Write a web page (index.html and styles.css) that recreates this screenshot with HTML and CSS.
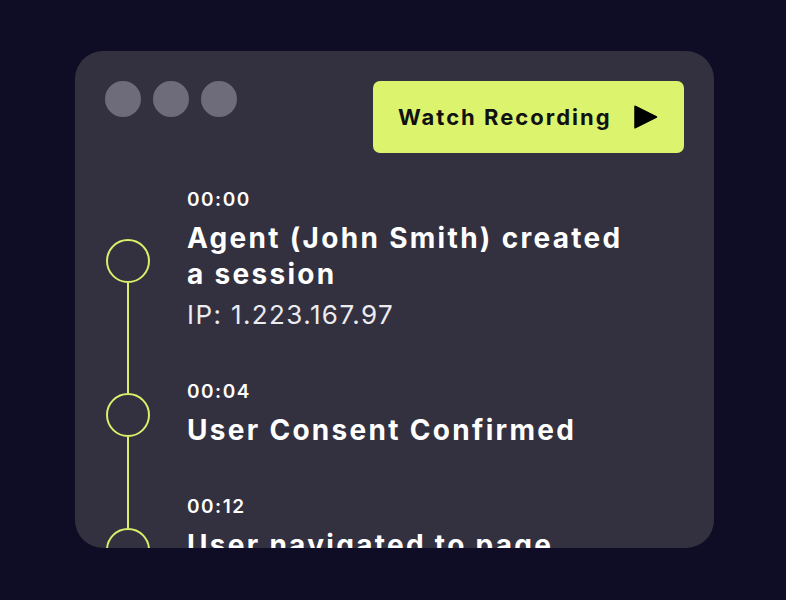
FILE: index.html
```html
<!DOCTYPE html>
<html lang="en">
<head>
<meta charset="utf-8">
<title>Session timeline</title>
<link rel="stylesheet" href="styles.css">
</head>
<body>
<div class="stage">
  <section class="card">
    <header class="card-head">
      <div class="dots">
        <span class="dot"></span><span class="dot"></span><span class="dot"></span>
      </div>
      <button class="watch-btn" type="button">
        <span>Watch Recording</span>
        <svg class="play" width="24" height="24" viewBox="0 0 24 24" aria-hidden="true">
          <path d="M1 1.2 L22.5 12 L1 22.8 Z" fill="#000" stroke="#000" stroke-width="1.5" stroke-linejoin="round"/>
        </svg>
      </button>
    </header>
    <ol class="timeline">
      <li class="event first">
        <div class="marker"><span class="seg"></span><span class="ring"></span><span class="seg"></span></div>
        <div class="event-body">
          <div class="time">00:00</div>
          <div class="title">Agent (John Smith) created a session</div>
          <div class="detail">IP: 1.223.167.97</div>
        </div>
      </li>
      <li class="event">
        <div class="marker"><span class="seg"></span><span class="ring"></span><span class="seg"></span></div>
        <div class="event-body">
          <div class="time">00:04</div>
          <div class="title">User Consent Confirmed</div>
        </div>
      </li>
      <li class="event">
        <div class="marker"><span class="seg"></span><span class="ring"></span><span class="seg"></span></div>
        <div class="event-body">
          <div class="time">00:12</div>
          <div class="title">User navigated to page</div>
          <div class="detail">/checkout</div>
        </div>
      </li>
    </ol>
  </section>
</div>
</body>
</html>
```
FILE: styles.css
```css
* { box-sizing: border-box; }

html, body {
  margin: 0;
  padding: 0;
  background: #0f0d25;
}

body {
  font-family: Inter, "Noto Sans", sans-serif;
  color: #ffffff;
}

.stage {
  width: 786px;
  height: 600px;
  padding: 51px 0 0 75px;
}

.card {
  width: 639px;
  height: 497px;
  background: #33313f;
  border-radius: 28px;
  overflow: hidden;
  padding: 30px 30px 0 30px;
}

.card-head {
  display: flex;
  justify-content: space-between;
  align-items: flex-start;
}

.dots {
  display: flex;
  gap: 12px;
}

.dot {
  width: 36px;
  height: 36px;
  border-radius: 50%;
  background: #6e6c7b;
}

.watch-btn {
  display: flex;
  align-items: center;
  height: 72px;
  width: 311px;
  padding: 0 26px 0 25px;
  border: 0;
  border-radius: 7px;
  background: #dcf46d;
  color: #111111;
  font-family: Inter, "Noto Sans", sans-serif;
  font-weight: 700;
  font-size: 22px;
  letter-spacing: 2px;
}

.play {
  flex: none;
  margin-left: auto;
}

.timeline {
  list-style: none;
  margin: 12px 0 0 0;
  padding: 0;
}

.event {
  display: grid;
  grid-template-columns: 46px 1fr;
  column-gap: 36px;
}

.marker {
  display: flex;
  flex-direction: column;
  align-items: center;
}

.seg {
  flex: 1;
  width: 2px;
  background: #d9f06b;
}

.first .seg:first-child {
  background: transparent;
}

.ring {
  flex: none;
  width: 44px;
  height: 44px;
  border: 2.5px solid #d9f06b;
  border-radius: 50%;
}

.event-body {
  padding: 24px 0;
  max-width: 450px;
}

.time {
  font-size: 19px;
  font-weight: 600;
  line-height: 22px;
  letter-spacing: 1.5px;
}

.title {
  margin-top: 9px;
  font-size: 28px;
  font-weight: 700;
  line-height: 36px;
  letter-spacing: 2.3px;
}

.detail {
  margin-top: 5px;
  font-size: 26px;
  font-weight: 400;
  line-height: 36px;
  letter-spacing: 1.4px;
  color: #ecebf0;
}
```
